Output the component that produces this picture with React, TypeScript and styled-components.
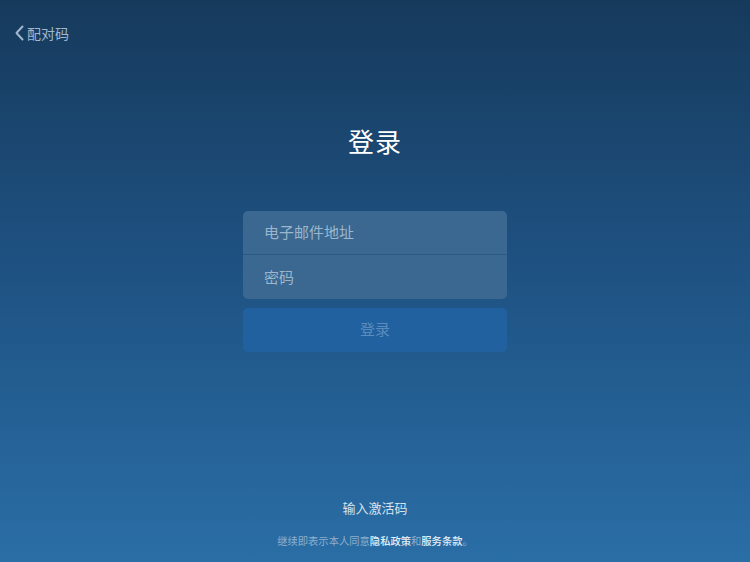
import styled, { createGlobalStyle } from "styled-components";

const GlobalStyle = createGlobalStyle`
	html, body {
		margin: 0;
		padding: 0;
	}
	body {
		font-family: "Noto Sans CJK SC", "Noto Sans", sans-serif;
	}
`;

const Page = styled.div`
	width: 750px;
	height: 562px;
	box-sizing: border-box;
	background: linear-gradient(180deg, #163a5c 0%, #1f5384 50%, #2a6ea6 100%);
	display: flex;
	flex-direction: column;
	align-items: center;
	color: #fff;
	overflow: hidden;
`;

const TopBar = styled.div`
	align-self: stretch;
	height: 66px;
	display: flex;
	align-items: center;
	padding-left: 14px;
`;

const BackButton = styled.button`
	background: none;
	border: none;
	padding: 0;
	display: flex;
	align-items: center;
	gap: 2px;
	color: #9fb8d0;
	font-family: inherit;
	font-size: 14px;
	cursor: pointer;
`;

const Title = styled.h1`
	margin: 56px 0 0;
	font-size: 26px;
	font-weight: 400;
	line-height: 38px;
	letter-spacing: 1px;
`;

const Form = styled.div`
	margin-top: 51px;
	width: 264px;
	display: flex;
	flex-direction: column;
	gap: 9px;
`;

const FieldGroup = styled.div`
	background: #3a6890;
	border-radius: 5px;
	display: flex;
	flex-direction: column;
	overflow: hidden;
`;

const Field = styled.input<{ $divider?: boolean }>`
	height: 44px;
	box-sizing: border-box;
	border: none;
	border-bottom: ${({ $divider }) => ($divider ? "1px solid #2d5880" : "none")};
	background: transparent;
	padding: 0 21px 2px;
	font-family: inherit;
	font-size: 15px;
	color: #fff;
	outline: none;
	&::placeholder {
		color: #9cb6cd;
	}
`;

const SubmitButton = styled.button`
	height: 44px;
	border: none;
	border-radius: 5px;
	background: #2161a0;
	color: #5b8cbd;
	font-family: inherit;
	font-size: 15px;
	padding: 0 0 3px;
`;

const Spacer = styled.div`
	flex: 1;
`;

const ActivateLink = styled.a`
	font-size: 13px;
	color: #d6e2ee;
	line-height: 20px;
	cursor: pointer;
`;

const Terms = styled.p`
	margin: 15px 0 13px;
	font-size: 10.3px;
	line-height: 16px;
	color: #8eaecb;
`;

const Strong = styled.span`
	color: #e6eef6;
	font-weight: 500;
`;

export default function App() {
	return (
		<>
			<GlobalStyle />
			<Page>
				<TopBar>
					<BackButton>
						<svg width="11" height="16" viewBox="0 0 11 16">
							<path
								d="M 8.5 1.5 L 2.5 8 L 8.5 14.5"
								fill="none"
								stroke="#9fb8d0"
								strokeWidth="2"
								strokeLinecap="round"
								strokeLinejoin="round"
							/>
						</svg>
						配对码
					</BackButton>
				</TopBar>
				<Title>登录</Title>
				<Form>
					<FieldGroup>
						<Field $divider placeholder="电子邮件地址" />
						<Field type="password" placeholder="密码" />
					</FieldGroup>
					<SubmitButton>登录</SubmitButton>
				</Form>
				<Spacer />
				<ActivateLink>输入激活码</ActivateLink>
				<Terms>
					继续即表示本人同意<Strong>隐私政策</Strong>和<Strong>服务条款</Strong>。
				</Terms>
			</Page>
		</>
	);
}
